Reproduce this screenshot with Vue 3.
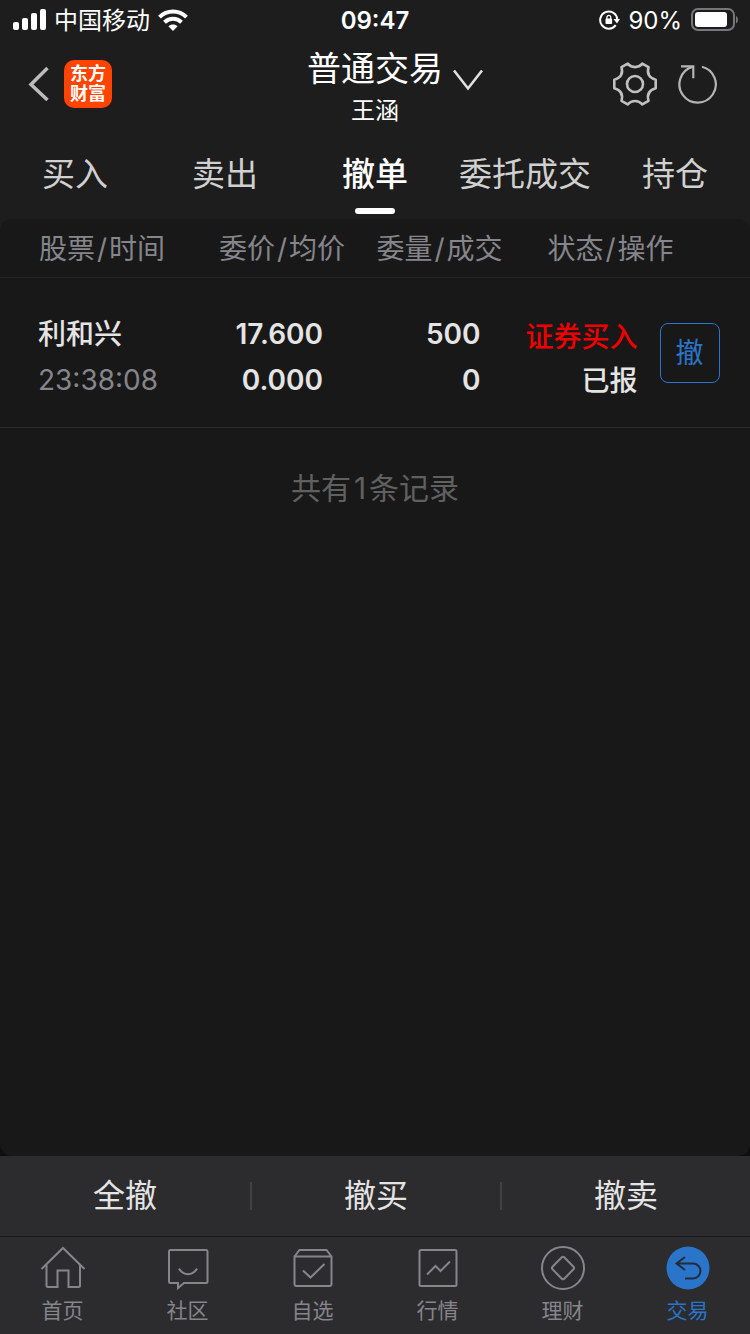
<template>
  <div class="page">
    <header class="top">
      <div class="status-bar">
        <div class="status-left">
          <svg width="34" height="22" viewBox="0 0 34 22" fill="#fff">
            <rect x="1" y="13" width="6" height="8" rx="2" />
            <rect x="10" y="9" width="6" height="12" rx="2" />
            <rect x="19" y="4" width="6" height="17" rx="2" />
            <rect x="28" y="0" width="6" height="21" rx="2" />
          </svg>
          <span>中国移动</span>
          <svg width="30" height="22" viewBox="0 0 30 22" fill="none" stroke="#fff" stroke-width="4">
            <path d="M1.500 8.200C9 .6 21 .6 28.500 8.200" />
            <path d="M6.500 13.200C11.300 8.600 18.700 8.600 23.500 13.200" />
            <path d="M15 22l-4.600-4.700c2.600-2.400 6.600-2.400 9.200 0z" fill="#fff" stroke="none" />
          </svg>
        </div>
        <time class="clock">09:47</time>
        <div class="status-right">
          <svg width="22" height="20" viewBox="0 0 22 20" fill="none">
            <path d="M17.700 15.200A8.600 8.600 0 1 1 19.300 9" stroke="#fff" stroke-width="2" />
            <path d="M15.500 9h6.500l-3 4.600z" fill="#fff" />
            <rect x="7.500" y="8.600" width="6.600" height="5.400" rx="0.800" fill="#fff" />
            <path d="M8.900 9V7.300a1.900 1.900 0 0 1 3.800 0V9" stroke="#fff" stroke-width="1.300" />
          </svg>
          <span>90%</span>
          <svg width="48" height="24" viewBox="0 0 48 24">
            <rect x="2" y="1" width="42" height="21" rx="6" fill="none" stroke="#77777a" stroke-width="2" />
            <rect x="5" y="4" width="32" height="15" rx="3" fill="#fff" />
            <path d="M46 8c2.600 1.500 2.600 6 0 7.500z" fill="#77777a" />
          </svg>
        </div>
      </div>

      <div class="title-bar">
        <div class="title-left">
          <button aria-label="返回">
            <svg width="22" height="36" viewBox="0 0 22 36" fill="none" stroke="#bcbcbc" stroke-width="3.500">
              <path d="M19.500 2L3 18.500l16.500 15.500" />
            </svg>
          </button>
          <a class="logo" href="#"><span>东方</span><span>财富</span></a>
        </div>
        <div class="title">
          <h1>普通交易</h1>
          <p>王涵</p>
        </div>
        <div class="title-right">
          <button class="switch" aria-label="切换账户">
            <svg width="32" height="22" viewBox="0 0 32 22" fill="none" stroke="#e0e0e0" stroke-width="2.600">
              <path d="M1 1.500l14 18 14-18" />
            </svg>
          </button>
          <div class="tools">
            <button aria-label="设置">
              <svg width="44" height="44" viewBox="0 0 44 44" fill="none" stroke="#c0c0c0" stroke-width="2.600" stroke-linejoin="round">
                <path d="M14.700 1.700C18.500 6.200 25.500 6.200 29.300 1.700L35.500 5.200C33.800 11.500 36.500 16 42.700 17.700V26.300C36.500 28 33.800 32.500 35.500 38.800L29.300 42.300C25.500 37.800 18.500 37.800 14.700 42.300L8.500 38.800C10.200 32.500 7.500 28 1.300 26.300V17.700C7.500 16 10.200 11.500 8.500 5.200Z" />
                <circle cx="22" cy="22" r="8" />
              </svg>
            </button>
            <button aria-label="刷新">
              <svg width="40" height="40" viewBox="0 0 40 40" fill="none" stroke="#b4b4b4" stroke-width="2.200">
                <path d="M24 2.700A18.200 18.200 0 1 1 14.500 2.900" />
                <path d="M3 2.300h12.300v12" />
              </svg>
            </button>
          </div>
        </div>
      </div>

      <nav class="tabs">
        <button
          v-for="tab in tabs"
          :key="tab"
          :class="{ active: tab === activeTab }"
          @click="activeTab = tab"
        >
          {{ tab }}
        </button>
      </nav>
    </header>

    <main class="content">
      <div class="list">
        <table>
          <colgroup>
            <col class="w-stock" />
            <col class="w-num" />
            <col class="w-num" />
            <col class="w-status" />
            <col class="w-action" />
          </colgroup>
          <thead>
            <tr>
              <th class="col-stock">股票<i>/</i>时间</th>
              <th class="col-num">委价<i>/</i>均价</th>
              <th class="col-num">委量<i>/</i>成交</th>
              <th class="col-status" colspan="2">状态<i>/</i>操作</th>
            </tr>
          </thead>
          <tbody>
            <tr v-for="order in orders" :key="order.time">
              <td class="stock">
                <div>{{ order.name }}</div>
                <div class="time">{{ order.time }}</div>
              </td>
              <td class="num">
                <div>{{ order.price }}</div>
                <div>{{ order.avgPrice }}</div>
              </td>
              <td class="num">
                <div>{{ order.amount }}</div>
                <div>{{ order.filled }}</div>
              </td>
              <td class="status">
                <div class="buy">{{ order.type }}</div>
                <div>{{ order.state }}</div>
              </td>
              <td class="action">
                <button>撤</button>
              </td>
            </tr>
          </tbody>
        </table>
        <p class="total">共有<span>{{ orders.length }}</span>条记录</p>
      </div>
    </main>

    <footer>
      <div class="actions">
        <button v-for="action in actions" :key="action">{{ action }}</button>
      </div>
      <nav class="bottom-nav">
        <a href="#">
          <svg viewBox="0 0 46 46">
            <path d="M1.500 23L23 2l21.500 21" />
            <path d="M6.500 18.500V39.500a1.500 1.500 0 0 0 1.500 1.500H17.500V24.500H28.500V41H38.500a1.500 1.500 0 0 0 1.500-1.500V18.500" />
          </svg>
          <span>首页</span>
        </a>
        <a href="#">
          <svg viewBox="0 0 46 46">
            <path d="M5.500 4H41a1.500 1.500 0 0 1 1.500 1.500V35.500a1.500 1.500 0 0 1-1.500 1.500H19l-6 5V37H5.500a1.500 1.500 0 0 1-1.500-1.500V5.500A1.500 1.500 0 0 1 5.500 4z" />
            <path d="M14 22.500c4 7.500 14 7.500 18 0" />
          </svg>
          <span>社区</span>
        </a>
        <a href="#">
          <svg viewBox="0 0 46 46">
            <path d="M4.500 10.500L9.500 4H36.500L41.500 10.500V38a2 2 0 0 1-2 2H6.500a2 2 0 0 1-2-2zM4.500 10.500H41.500" />
            <path d="M13 24.500l7.500 7L34.500 18" />
          </svg>
          <span>自选</span>
        </a>
        <a href="#">
          <svg viewBox="0 0 46 46">
            <rect x="4.500" y="4" width="37" height="36" rx="1.500" />
            <path d="M12 28.500l8.500-8.500 5 5L35 15.500" />
          </svg>
          <span>行情</span>
        </a>
        <a href="#">
          <svg viewBox="0 0 46 46">
            <circle cx="23" cy="22" r="21" />
            <path d="M21.800 11.300L12.500 20.800a1.700 1.700 0 0 0 0 2.400L21.800 32.700a1.700 1.700 0 0 0 2.400 0L33.500 23.200a1.700 1.700 0 0 0 0-2.400L24.200 11.300a1.700 1.700 0 0 0-2.400 0z" />
          </svg>
          <span>理财</span>
        </a>
        <a href="#" class="current">
          <svg viewBox="0 0 46 46">
            <circle cx="23" cy="22" r="21.500" fill="#2a74c9" stroke="none" />
            <path d="M20 11L11.500 17.500l8.500 6.500M12 17.500H28a7.500 7.500 0 0 1 0 15H20" stroke="#242c38" />
          </svg>
          <span>交易</span>
        </a>
      </nav>
    </footer>
  </div>
</template>

<script setup>
import { ref } from "vue";

const tabs = ["买入", "卖出", "撤单", "委托成交", "持仓"];
const activeTab = ref("撤单");

const orders = ref([
  {
    name: "利和兴",
    time: "23:38:08",
    price: "17.600",
    avgPrice: "0.000",
    amount: 500,
    filled: 0,
    type: "证券买入",
    state: "已报",
  },
]);

const actions = ["全撤", "撤买", "撤卖"];
</script>

<style>
body {
  background: #181818;
}
</style>

<style scoped>
.page {
  display: flex;
  flex-direction: column;
  min-height: 100vh;
  background: #1d1d1d;
  color: #e4e4e4;
  font-family: Inter, "Noto Sans CJK SC", sans-serif;
}

button {
  padding: 0;
  border: none;
  background: none;
  color: inherit;
  font: inherit;
  cursor: pointer;
}

a {
  color: inherit;
  text-decoration: none;
}

svg {
  display: block;
}

.status-bar {
  display: grid;
  grid-template-columns: 1fr auto 1fr;
  align-items: center;
  height: 40px;
  padding: 0 12px;
  color: #fff;
  font-size: 24px;
  line-height: 40px;
}

.status-left,
.status-right {
  display: flex;
  align-items: center;
  gap: 8px;
}

.status-left span,
.status-right span,
.clock {
  padding-top: 2px;
  line-height: 38px;
}

.status-right {
  justify-content: flex-end;
}

.clock {
  font-weight: 600;
}

.title-bar {
  display: grid;
  grid-template-columns: 1fr auto 1fr;
  align-items: center;
  height: 91px;
}

.title-left {
  display: flex;
  align-items: center;
  gap: 14px;
  padding: 0 0 3px 28px;
}

.logo {
  display: flex;
  flex-direction: column;
  align-items: center;
  justify-content: center;
  width: 48px;
  height: 48px;
  border-radius: 10px;
  background: #ff4400;
  color: #fff;
  font-size: 18px;
  font-weight: 700;
  line-height: 20px;
}

.title {
  padding-top: 7px;
  color: #fff;
  text-align: center;
}

.title h1 {
  margin: 0;
  font-size: 34px;
  font-weight: 400;
  line-height: 44px;
}

.title p {
  margin: 0;
  font-size: 24px;
  line-height: 40px;
}

.title-right {
  display: flex;
  align-items: center;
  justify-content: space-between;
  padding: 0 32px 3px 10px;
}

.switch {
  padding-bottom: 8px;
}

.tools {
  display: flex;
  align-items: center;
  gap: 21px;
}

.tabs {
  display: grid;
  grid-template-columns: repeat(5, 1fr);
  height: 88px;
}

.tabs button {
  display: flex;
  flex-direction: column;
  align-items: center;
  padding-top: 17px;
  color: #d0d0d0;
  font-size: 33px;
  line-height: 52px;
  white-space: nowrap;
}

.tabs .active {
  color: #fff;
  font-weight: 500;
}

.tabs .active::after {
  content: "";
  width: 40px;
  height: 6px;
  margin-top: 8px;
  border-radius: 3px;
  background: #fff;
}

.content {
  display: flex;
  flex: 1;
  flex-direction: column;
  background: linear-gradient(#1d1d1d 50%, #0e0e0e 50%);
}

.list {
  flex: 1;
  border-radius: 12px;
  background: #181818;
}

table {
  width: 100%;
  table-layout: fixed;
  border-collapse: separate;
  border-spacing: 0;
}

.w-stock {
  width: 25%;
}

.w-num {
  width: 21%;
}

.w-status {
  width: 18%;
}

.w-action {
  width: 15%;
}

th {
  padding: 2px 0 0;
  border-bottom: 1px solid #222;
  color: #85858b;
  font-size: 28px;
  font-weight: 400;
  line-height: 56px;
  white-space: nowrap;
}

th i {
  margin: 0 2px;
  font-style: normal;
}

.col-stock {
  padding-left: 39px;
  text-align: left;
}

.col-num {
  text-align: right;
}

.col-status {
  padding-left: 45px;
  text-align: left;
}

td {
  padding: 0;
  height: 149px;
  border-bottom: 1px solid #2a2a2a;
  font-size: 28px;
  font-weight: 500;
  line-height: 46px;
  white-space: nowrap;
}

td div:first-child {
  padding-top: 8px;
}

.stock {
  padding-left: 38px;
}

.time {
  color: #85858b;
  font-weight: 400;
}

.num {
  padding-right: 22px;
  font-weight: 600;
  text-align: right;
}

.status {
  line-height: 44px;
  text-align: right;
}

td.status div:first-child {
  padding-top: 12px;
}

.buy {
  color: #ee0000;
}

.action {
  padding-left: 22px;
}

.action button {
  display: block;
  width: 60px;
  height: 60px;
  border: 1px solid #2a74c9;
  border-radius: 8px;
  color: #2a74c9;
  font-weight: 400;
}

.total {
  margin: 36px 0 0;
  color: #606060;
  font-size: 30px;
  line-height: 48px;
  text-align: center;
}

.total span {
  margin: 0 3px;
}

footer {
  background: #2c2c2e;
}

.actions {
  display: grid;
  grid-template-columns: repeat(3, 1fr);
  align-items: center;
  height: 80px;
  font-size: 32px;
}

.actions button {
  line-height: 28px;
}

.actions button + button {
  border-left: 2px solid #414143;
}

.bottom-nav {
  display: grid;
  grid-template-columns: repeat(6, 1fr);
  height: 97px;
  border-top: 1px solid #1a1a1c;
  color: #85858b;
  font-size: 21px;
}

.bottom-nav a {
  display: flex;
  flex-direction: column;
  align-items: center;
  padding-top: 9px;
  line-height: 38px;
}

.bottom-nav svg {
  width: 46px;
  height: 46px;
  fill: none;
  stroke: currentColor;
  stroke-width: 2;
}

.bottom-nav .current {
  color: #2a74c9;
}
</style>
